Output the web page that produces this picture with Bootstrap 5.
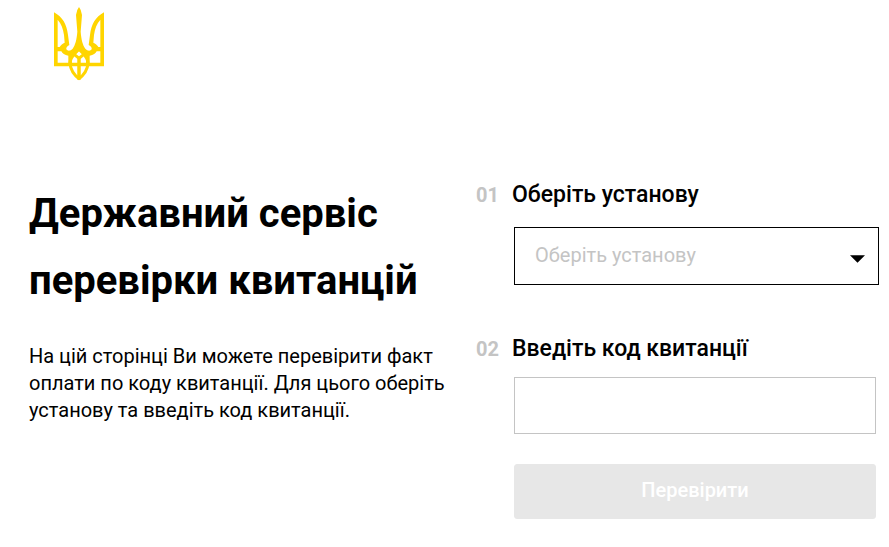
<!DOCTYPE html>
<html lang="uk">
<head>
<meta charset="utf-8">
<meta name="viewport" content="width=device-width, initial-scale=1">
<title>Державний сервіс перевірки квитанцій</title>
<link href="https://cdn.jsdelivr.net/npm/bootstrap@5.3.0/dist/css/bootstrap.min.css" rel="stylesheet">
<style>
body { font-family: Roboto, "Liberation Sans", sans-serif; color: #000; background: #fff; }
.site-header { padding: 7px 54px 0; }
.trident { width: 50px; height: 74px; }
.page-grid { display: grid; grid-template-columns: 420px minmax(0, 1fr); column-gap: 27px; padding: 99px 10px 0 29px; }
.page-title { font-size: 40px; line-height: 67px; font-weight: 700; margin: 0 0 29px; }
.intro { font-size: 20px; line-height: 27px; }
.step-grid { display: grid; grid-template-columns: 36px minmax(0, 1fr); align-items: baseline; }
.step-grid + .step-grid { margin-top: 49px; }
.step-number { font-size: 20px; font-weight: 700; color: #c4c4c4; }
.step-label { font-size: 23px; line-height: 30px; font-weight: 500; }
.step-control { grid-column: 2; margin-top: 17px; margin-left: 2px; }
.step-control.inset { margin-top: 13px; margin-right: 3px; }
.field { border-radius: 0; font-size: 20px; height: 57px; border-color: #c4c4c4; }
select.field { height: 58px; padding: 0 20px 2px; color: #c4c4c4; border-color: #000;
  background-image: url("data:image/svg+xml,%3Csvg xmlns='http://www.w3.org/2000/svg' viewBox='0 0 16 8'%3E%3Cpath d='M0 0h16L8 8z'/%3E%3C/svg%3E");
  background-size: 15px 8px; background-position: right 13px top 27px; }
.btn-check-receipt { height: 55px; margin-top: 30px; font-size: 20px; font-weight: 500; border-radius: 3px; padding-bottom: 9px;
  --bs-btn-disabled-bg: #e7e7e7; --bs-btn-disabled-border-color: #e7e7e7; --bs-btn-disabled-color: #fff; --bs-btn-disabled-opacity: 1; }
</style>
</head>
<body>
<header class="site-header">
  <svg class="trident d-block" viewBox="30 20 150 222" role="img" aria-label="Тризуб" fill="#ffd500">
    <defs>
      <g id="half">
        <path d="M30 36C56 50 68 72 72 104L76 134C69 138 66 142 67 147C71 153 80 152 86 145C94 134 98 118 100 94L96 44Q98 28 105 20V150C102 157 93 163 84 162V187H105V198H30ZM41 58V140H47C50 134 56 130 62 127L60 104C57 84 52 70 41 58ZM41 153V187H73V166C62 164 55 160 52 153Z" fill-rule="evenodd"/>
        <path d="M105 146C94 160 78 168 78 190C80 212 90 224 106 236M84 160C91 160 98 168 105 174V238" fill="none" stroke="#ffd500" stroke-width="9"/>
      </g>
    </defs>
    <use href="#half"/>
    <use href="#half" transform="matrix(-1 0 0 1 210 0)"/>
  </svg>
</header>
<main class="page-grid">
  <section>
    <h1 class="page-title">Державний сервіс перевірки квитанцій</h1>
    <p class="intro mb-0">На цій сторінці Ви можете перевірити факт оплати по коду квитанції. Для цього оберіть установу та введіть код квитанції.</p>
  </section>
  <form>
    <div class="step-grid">
      <span class="step-number">01</span>
      <label class="step-label" for="institution">Оберіть установу</label>
      <div class="step-control">
        <select class="form-select field" id="institution"><option selected>Оберіть установу</option></select>
      </div>
    </div>
    <div class="step-grid">
      <span class="step-number">02</span>
      <label class="step-label" for="code">Введіть код квитанції</label>
      <div class="step-control inset">
        <input class="form-control field" type="text" id="code">
        <button class="btn btn-check-receipt w-100" type="submit" disabled>Перевірити</button>
      </div>
    </div>
  </form>
</main>
<script src="https://cdn.jsdelivr.net/npm/bootstrap@5.3.0/dist/js/bootstrap.bundle.min.js"></script>
</body>
</html>
